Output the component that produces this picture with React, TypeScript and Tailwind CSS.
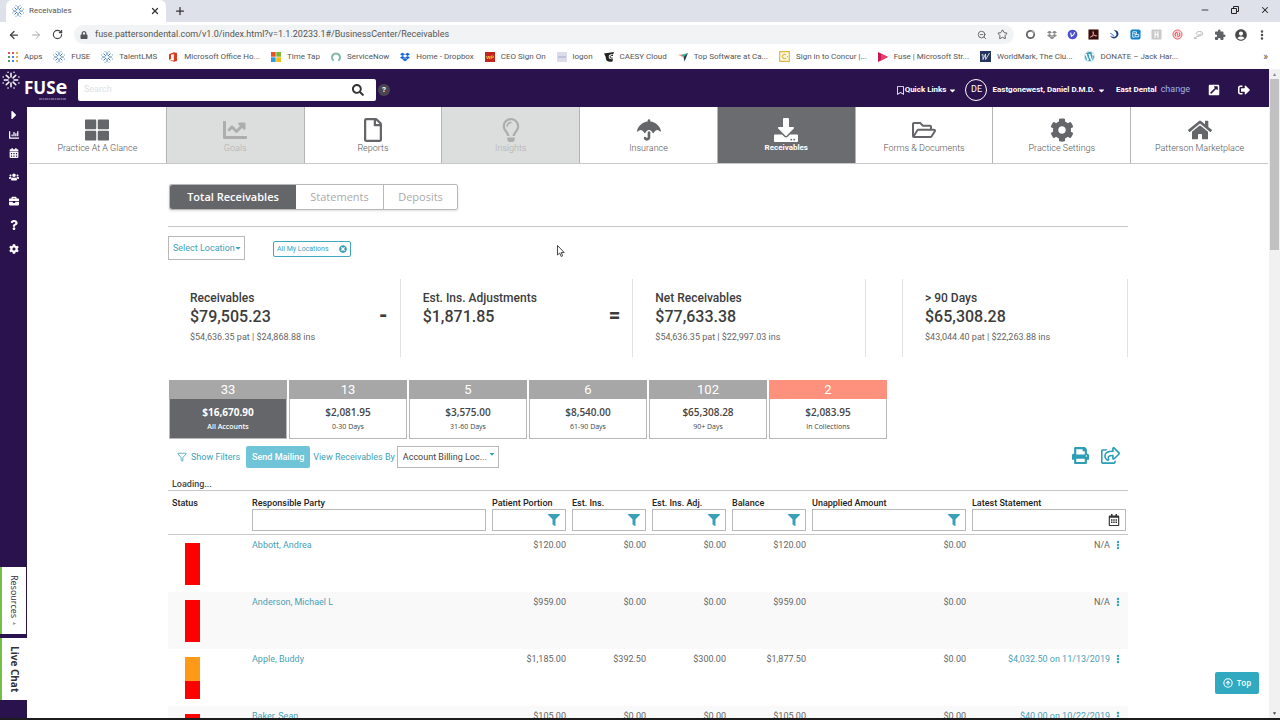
import React from 'react';
import {
  FaBriefcase, FaCalendarAlt, FaCaretDown, FaCaretRight, FaChartBar, FaChartLine, FaCog, FaDownload,
  FaFilter, FaHome, FaLock, FaPrint, FaQuestion, FaRegBookmark, FaRegCalendarAlt,
  FaRegFile, FaRegFolderOpen, FaRegLightbulb, FaRegShareSquare, FaSearch, FaSignOutAlt, FaThLarge,
  FaTimesCircle, FaUmbrella, FaUsers, FaDropbox, FaWordpress, FaExternalLinkSquareAlt,
} from 'react-icons/fa';
import { MdAccountCircle, MdExtension } from 'react-icons/md';
import {
  ArrowLeft, ArrowRight, CircleArrowUp, EllipsisVertical, Funnel, Minus, Plus, RotateCw, Star, X, ZoomOut,
} from 'lucide-react';

const Burst: React.FC<{ className: string }> = ({ className }) => (
  <svg viewBox="0 0 24 24" className={className} fill="none" stroke="currentColor" strokeWidth="2" strokeLinecap="round">
    <path d="M12 3v5M12 16v5M3 12h5M16 12h5M5.6 5.6l3.6 3.6M14.8 14.8l3.6 3.6M18.4 5.6l-3.6 3.6M9.2 14.8l-3.6 3.6" />
    <path d="M8 1.5h.1M16 1.5h.1M22.5 8h.1M22.5 16h.1M16 22.5h.1M8 22.5h.1M1.5 16h.1M1.5 8h.1" />
  </svg>
);

const AppsIcon = () => (
  <svg viewBox="0 0 10 10" className="size-2.5">
    {['#d9534f', '#d9534f', '#f0ad4e', '#4a9e5c', '#4285f4', '#f0ad4e', '#4a9e5c', '#4285f4', '#f0ad4e'].map((c, i) => (
      <rect key={i} x={(i % 3) * 4} y={Math.floor(i / 3) * 4} width="2" height="2" fill={c} />
    ))}
  </svg>
);

const OfficeIcon = () => (
  <svg viewBox="0 0 10 10" className="size-2.5">
    <path d="M1 2.3 6 .2 9 1v8L6 9.8 1 8l4.8.5V1.9L3 2.7v4.4L1 8z" fill="#d83b1e" />
  </svg>
);

const TilesIcon = () => (
  <svg viewBox="0 0 10 10" className="size-2.5">
    <path d="M0 0h4.7v4.7H0z" fill="#e8502e" />
    <path d="M5.3 0H10v4.7H5.3z" fill="#7db72f" />
    <path d="M0 5.3h4.7V10H0z" fill="#2a9fe0" />
    <path d="M5.3 5.3H10V10H5.3z" fill="#f7b916" />
  </svg>
);

const RingIcon = () => (
  <svg viewBox="0 0 10 10" className="size-2.5">
    <path d="M2.6 8.6a4 4 0 1 1 4.8 0" fill="none" stroke="#7fb8a4" strokeWidth="2" />
  </svg>
);

const CeoIcon = () => (
  <svg viewBox="0 0 10 10" className="size-2.5">
    <path d="M0 0h10v10H0z" fill="#c3241b" />
    <path d="M1.5 4l1 3 1-3 1 3 .6-3M6.2 7V4h1.5a.8.8 0 0 1 0 1.7H6.5" fill="none" stroke="#f9cf3c" strokeWidth=".8" />
  </svg>
);

const LogonIcon = () => (
  <svg viewBox="0 0 10 10" className="size-2.5">
    <path d="M0 0h10v10H0z" fill="#dcdcec" />
    <path d="M1 5h8" stroke="#a9a9cc" />
  </svg>
);

const CaesyIcon = () => (
  <svg viewBox="0 0 10 10" className="size-2.5">
    <path d="M0 1.5 10 0 9 2.5C6 1.8 4.6 3 4.7 5c.1 2 2 2.7 4.3 2L8.5 9.5C4 10.5 1.5 8.5 1.7 5z" fill="#222" />
    <path d="M9 3.5C7 3.2 6 4 6.2 5.2c.2 1 1.3 1.2 2.6.8" fill="none" stroke="#222" />
  </svg>
);

const CapterraIcon = () => (
  <svg viewBox="0 0 10 10" className="size-2.5">
    <path d="M0 2.5 6 3 4.5 5z" fill="#f58a5b" />
    <path d="M3 2.7 10 1 6 5z" fill="#3fb0a0" />
    <path d="M10 1 6.5 9.5 5.5 5z" fill="#1d3c4f" />
  </svg>
);

const ConcurIcon = () => (
  <svg viewBox="0 0 11 11" className="size-[11px]">
    <path d="M.7.7h9.6v9.6H.7z" fill="#fff8e0" stroke="#e3b63c" strokeWidth="1.2" />
    <path d="M6.8 3.7a2.2 2.2 0 1 0 0 3.6M8.5 5.5h.1" fill="none" stroke="#d9a520" strokeWidth="1" strokeLinecap="round" />
  </svg>
);

const StreamIcon = () => (
  <svg viewBox="0 0 10 10" className="size-2.5">
    <path d="M0 0 10 5 0 10z" fill="#c8194f" />
    <path d="M3 1.5 10 5 3 8.5z" fill="#e5406f" />
  </svg>
);

const WorldMarkIcon = () => (
  <svg viewBox="0 0 11 11" className="size-[11px]">
    <path d="M0 0h11v11H0z" fill="#24365f" />
    <path d="M1.5 4l1.5-.5L3 8.5 5.5 3 5.7 8.5 9.5 2" fill="none" stroke="#fff" strokeWidth=".8" />
  </svg>
);

const bookmarks = [
  { label: 'Apps', icon: <AppsIcon /> },
  { label: 'FUSE', icon: <Burst className="size-3 text-[#3f78b5]" /> },
  { label: 'TalentLMS', icon: <Burst className="size-3 text-[#3f78b5]" /> },
  { label: 'Microsoft Office Ho...', icon: <OfficeIcon /> },
  { label: 'Time Tap', icon: <TilesIcon /> },
  { label: 'ServiceNow', icon: <RingIcon /> },
  { label: 'Home - Dropbox', icon: <FaDropbox className="size-2.5 text-[#1763d6]" /> },
  { label: 'CEO Sign On', icon: <CeoIcon /> },
  { label: 'logon', icon: <LogonIcon /> },
  { label: 'CAESY Cloud', icon: <CaesyIcon /> },
  { label: 'Top Software at Ca...', icon: <CapterraIcon /> },
  { label: 'Sign in to Concur |...', icon: <ConcurIcon /> },
  { label: 'Fuse | Microsoft Str...', icon: <StreamIcon /> },
  { label: 'WorldMark, The Clu...', icon: <WorldMarkIcon /> },
  { label: 'DONATE – Jack Har...', icon: <FaWordpress className="size-[11px] text-[#3a9fb5]" /> },
];

const extensions = [
  {
    name: 'Shield',
    icon: (
      <svg viewBox="0 0 12 12" className="size-[11px]">
        <circle cx="6" cy="6" r="4" fill="#fff" stroke="#666" strokeWidth="2" />
        <path d="M6 2h4v4z" fill="#aaa" />
      </svg>
    ),
  },
  { name: 'Dropbox', icon: <FaDropbox className="size-2.5 text-[#8a8a8a]" /> },
  {
    name: 'Notes',
    icon: (
      <svg viewBox="0 0 12 12" className="size-[11px]">
        <circle cx="6" cy="6" r="5.3" fill="#4a4fcf" />
        <path d="M4 4l.8 4L7 6.5 8.5 3.5" fill="none" stroke="#fff" strokeWidth="1.2" />
      </svg>
    ),
  },
  {
    name: 'Acrobat',
    icon: (
      <svg viewBox="0 0 12 12" className="size-[11px]">
        <path d="M.5.5h11v11H.5z" fill="#3a0d0d" />
        <path d="M2.5 9C5 8 6.5 5 5.8 3c-.6-.8-.9.3 0 2C6.8 7 8 8 9.5 7.6 9.5 6.5 5 7 2.5 9z" fill="none" stroke="#f2b7a8" strokeWidth=".8" />
      </svg>
    ),
  },
  {
    name: 'Swirl',
    icon: (
      <svg viewBox="0 0 12 12" className="size-[11px]">
        <path d="M5 1c5 0 7 4 4 7.5-2.5 3-6 2-8-1.5 3 2 5 2 6.5.5C9 5.5 8 3 5 1z" fill="#1d3f7a" />
        <path d="M1.5 4.5l4 3" stroke="#4a90d9" strokeWidth="1.2" />
      </svg>
    ),
  },
  {
    name: 'Reader',
    icon: (
      <svg viewBox="0 0 12 12" className="size-[11px]">
        <rect x=".5" y=".5" width="11" height="11" rx="2" fill="#0f7fd0" />
        <path d="M3 3h4v2.5M3 3v6h2M5.5 6h4v2.5h-4zM4 5h2" fill="none" stroke="#fff" strokeWidth=".9" />
      </svg>
    ),
  },
  {
    name: 'Honey',
    icon: (
      <svg viewBox="0 0 12 12" className="size-[11px]">
        <rect x=".5" y=".5" width="11" height="11" rx="1" fill="#c9c9c9" />
        <path d="M4.5 2.5v7M7.5 2.5v7M4.5 6h3" stroke="#fff" strokeWidth="1.3" />
      </svg>
    ),
  },
  {
    name: 'Target',
    icon: (
      <svg viewBox="0 0 12 12" className="size-[11px]">
        <circle cx="6" cy="6" r="5" fill="#fbd9db" stroke="#e0555f" />
        <path d="M4 8c-1.5-2.5 0-4.5 2-4.5M8 4c1.5 2.5 0 4.5-2 4.5M6 5v2" fill="none" stroke="#e0555f" strokeWidth="1.1" />
      </svg>
    ),
  },
  {
    name: 'Loop',
    icon: (
      <svg viewBox="0 0 12 12" className="size-[11px]">
        <path d="M1 10c2-2 6-2 9-3.5C12 4 9 2 5.5 3 2.5 4 3 6.5 6 6.5c2 0 3-1.5 2-2M1 10l3 .5" fill="none" stroke="#aaa" strokeWidth=".9" />
      </svg>
    ),
  },
  { name: 'Extensions', icon: <MdExtension className="size-3 text-[#5f6368]" /> },
  { name: 'Profile', icon: <MdAccountCircle className="size-3.5 text-[#4a4a4a]" /> },
  { name: 'Menu', icon: <EllipsisVertical className="size-3 text-[#444]" strokeWidth={3} /> },
];

const sections = [
  { label: 'Practice At A Glance', Icon: FaThLarge },
  { label: 'Goals', Icon: FaChartLine, disabled: true },
  { label: 'Reports', Icon: FaRegFile },
  { label: 'Insights', Icon: FaRegLightbulb, disabled: true },
  { label: 'Insurance', Icon: FaUmbrella },
  { label: 'Receivables', Icon: FaDownload, active: true },
  { label: 'Forms & Documents', Icon: FaRegFolderOpen },
  { label: 'Practice Settings', Icon: FaCog },
  { label: 'Patterson Marketplace', Icon: FaHome },
];

const totals = [
  { title: 'Receivables', amount: '$79,505.23', detail: '$54,636.35 pat | $24,868.88 ins', sign: '-' },
  { title: 'Est. Ins. Adjustments', amount: '$1,871.85', sign: '=' },
  { title: 'Net Receivables', amount: '$77,633.38', detail: '$54,636.35 pat | $22,997.03 ins' },
];

const buckets = [
  { count: 33, amount: '$16,670.90', label: 'All Accounts', kind: 'selected' },
  { count: 13, amount: '$2,081.95', label: '0-30 Days' },
  { count: 5, amount: '$3,575.00', label: '31-60 Days' },
  { count: 6, amount: '$8,540.00', label: '61-90 Days' },
  { count: 102, amount: '$65,308.28', label: '90+ Days' },
  { count: 2, amount: '$2,083.95', label: 'In Collections', kind: 'collections' },
];

const columns = [
  { id: 'status', label: 'Status', width: 'w-[80px]', filter: 'none' },
  { id: 'party', label: 'Responsible Party', width: 'w-[240px]', filter: 'text' },
  { id: 'patient', label: 'Patient Portion', width: 'w-[80px]', filter: 'funnel' },
  { id: 'ins', label: 'Est. Ins.', width: 'w-[80px]', filter: 'funnel' },
  { id: 'adj', label: 'Est. Ins. Adj.', width: 'w-[80px]', filter: 'funnel' },
  { id: 'balance', label: 'Balance', width: 'w-[80px]', filter: 'funnel' },
  { id: 'unapplied', label: 'Unapplied Amount', width: 'w-[160px]', filter: 'funnel' },
  { id: 'statement', label: 'Latest Statement', width: 'w-[160px]', filter: 'date' },
];

const accounts = [
  { name: 'Abbott, Andrea', amounts: ['$120.00', '$0.00', '$0.00', '$120.00', '$0.00'], statement: 'N/A' },
  { name: 'Anderson, Michael L', amounts: ['$959.00', '$0.00', '$0.00', '$959.00', '$0.00'], statement: 'N/A' },
  { name: 'Apple, Buddy', amounts: ['$1,185.00', '$392.50', '$300.00', '$1,877.50', '$0.00'], statement: '$4,032.50 on 11/13/2019', mixed: true },
  { name: 'Baker, Sean', amounts: ['$105.00', '$0.00', '$0.00', '$105.00', '$0.00'], statement: '$40.00 on 10/22/2019' },
];

const BrowserChrome: React.FC = () => (
  <div className="shrink-0 bg-white text-[#555]">
    <div className="flex h-[22px] items-center bg-[#dee0ea] pl-1.5">
      <div className="flex h-full w-40 items-center rounded-t-md bg-white px-1.5">
        <Burst className="size-3 text-[#3f78b5]" />
        <span className="ml-[5px] flex-1 text-[8px]">Receivables</span>
        <button aria-label="Close tab"><X className="size-2.5 text-[#333]" strokeWidth={3} /></button>
      </div>
      <button aria-label="New tab" className="ml-2"><Plus className="size-3 text-[#333]" strokeWidth={2.5} /></button>
      <div className="ml-auto flex items-center gap-5 pr-2.5 pb-0.5 text-[#222]">
        <button aria-label="Minimize"><Minus className="size-2.5" /></button>
        <button aria-label="Restore">
          <svg viewBox="0 0 10 10" className="size-2.5" fill="none" stroke="currentColor">
            <path d="M1.5 3.5h5v5h-5zM3.5 3.5v-2h5v5h-2" />
          </svg>
        </button>
        <button aria-label="Close"><X className="size-2.5" strokeWidth={2.5} /></button>
      </div>
    </div>
    <div className="flex h-[25px] items-center px-2">
      <div className="flex items-center gap-2.5 text-[#444]">
        <button aria-label="Back"><ArrowLeft className="size-3" strokeWidth={2.5} /></button>
        <button aria-label="Forward"><ArrowRight className="size-3 text-[#aaa]" /></button>
        <button aria-label="Reload"><RotateCw className="size-[11px]" strokeWidth={2.5} /></button>
      </div>
      <div className="ml-[11px] flex h-[19px] flex-1 items-center rounded-full bg-[#f1f3f4] px-1.5">
        <FaLock className="size-2 text-[#555]" />
        <input
          aria-label="Address"
          readOnly
          value="fuse.pattersondental.com/v1.0/index.html?v=1.1.20233.1#/BusinessCenter/Receivables"
          className="ml-[7px] flex-1 bg-transparent text-[9px] outline-none"
        />
        <div className="flex items-center gap-2.5 text-[#555]">
          <ZoomOut className="size-2.5" />
          <Star className="size-[11px]" />
        </div>
      </div>
      <div className="ml-1.5 flex items-center">
        {extensions.map(e => (
          <button key={e.name} aria-label={e.name} className="flex w-[21px] justify-center">{e.icon}</button>
        ))}
      </div>
    </div>
    <div className="flex h-[22px] items-center gap-[11px] pr-3 pb-[3px] pl-2 text-[8px]">
      {bookmarks.map(b => (
        <a key={b.label} href="#" className="flex shrink-0 items-center gap-1.5">
          {b.icon}
          {b.label}
        </a>
      ))}
      <span className="ml-auto text-[10px]">»</span>
    </div>
  </div>
);

const TopBar: React.FC = () => (
  <header className="flex h-[38px] shrink-0 items-center bg-[#2a124d] pt-1 pr-[19px] text-[8px] font-bold text-white">
    <div className="flex h-full w-[78px] items-start">
      <Burst className="-mt-0.5 ml-0.5 size-[18px]" />
      <div className="mt-1 ml-1">
        <div className="flex items-baseline font-['Open_Sans',sans-serif] text-[17px] leading-5 font-bold">
          FUS<span className="text-[20px]">e</span>
        </div>
        <svg viewBox="0 0 42 2" className="h-0.5 w-[42px]">
          <path d="M15 1h27" stroke="#a99cc2" strokeDasharray="3 .5 2 .5" />
        </svg>
      </div>
    </div>
    <div className="flex h-[22px] w-[298px] items-center rounded-xs bg-white px-1.5">
      <input aria-label="Search" placeholder="Search" className="flex-1 text-[9px] font-normal text-[#333] outline-none placeholder:text-[#e0e0e0]" />
      <button aria-label="Run search" className="mr-1.5"><FaSearch className="size-3 text-[#333]" /></button>
    </div>
    <button className="ml-0.5 flex size-3 items-center justify-center rounded-full bg-[#4a4550]" aria-label="Help">?</button>
    <div className="ml-auto flex items-center">
      <button className="flex items-center"><FaRegBookmark className="size-[9px]" />Quick Links<FaCaretDown className="ml-0.5 size-[9px]" /></button>
      <span className="ml-2 flex size-[22px] items-center justify-center rounded-full border border-white text-[9px] font-normal">DE</span>
      <button className="ml-[5px] flex items-center gap-0.5">Eastgonewest, Daniel D.M.D.<FaCaretDown className="size-[9px]" /></button>
      <span className="ml-2.5">East Dental</span>
      <a href="#" className="ml-1 text-[9px] font-normal text-[#9db8e8]">change</a>
      <button aria-label="Open in new window" className="ml-[18px]"><FaExternalLinkSquareAlt className="size-3" /></button>
      <button aria-label="Sign out" className="ml-[18px]"><FaSignOutAlt className="size-3" /></button>
    </div>
  </header>
);

const SideBar: React.FC = () => (
  <aside className="flex w-[27px] shrink-0 flex-col bg-[#2a124d] text-white">
    <nav className="flex flex-col items-center pt-px">
      <button aria-label="Expand" className="mb-2"><FaCaretRight className="size-3.5" /></button>
      <button aria-label="Dashboard" className="mb-2"><FaChartBar className="size-2.5" /></button>
      <button aria-label="Schedule" className="mb-3.5"><FaCalendarAlt className="size-2.5" /></button>
      <button aria-label="Patients" className="mb-3.5"><FaUsers className="size-2.5" /></button>
      <button aria-label="Business Center" className="mb-3.5"><FaBriefcase className="size-2.5" /></button>
      <button aria-label="Help" className="mb-3.5"><FaQuestion className="size-2.5" /></button>
      <button aria-label="Settings"><FaCog className="size-2.5" /></button>
    </nav>
    <div className="mt-auto mb-[18px] flex flex-col gap-1 font-['Open_Sans',sans-serif] text-[#333]">
      <button className="mr-px flex h-[67px] items-center justify-center border-l-2 border-[#74bf44] bg-white text-[9px] [writing-mode:vertical-rl]">
        Resources <span className="text-[6px] text-[#999]">▸</span>
      </button>
      <button className="flex h-[62px] items-center justify-center border-l-2 border-[#74bf44] bg-white text-[10px] font-bold [writing-mode:vertical-rl]">
        Live Chat
      </button>
    </div>
  </aside>
);

const SectionNav: React.FC = () => (
  <nav className="mr-px ml-0.5 flex h-[57px] border-b border-[#c8c8c8]">
    {sections.map(({ label, Icon, disabled, active }) => (
      <button
        key={label}
        disabled={disabled}
        className={`flex flex-1 flex-col items-center border-r border-[#b4b4b4] pt-[11px] leading-3 last:border-r-0 ${
          active ? 'bg-[#6b6c70] text-[8px] font-bold text-white' : disabled ? 'bg-[#dcdedd] text-[9px] font-light text-[#b0b0b0]' : 'text-[9px] font-light text-[#555]'
        }`}
      >
        <Icon className={`size-6 ${active ? 'text-white' : disabled ? 'text-[#adadad]' : 'text-[#65666a]'}`} />
        {label}
      </button>
    ))}
  </nav>
);

const Total: React.FC<{ title: string; amount: string; detail?: string; sign?: string }> = ({ title, amount, detail, sign }) => (
  <div className="flex h-full items-start justify-between pt-3 pr-3 pl-[22px] text-[#3c3c3c]">
    <div>
      <h3 className="text-[12px] leading-[14px] font-medium">{title}</h3>
      <p className="text-[16px] leading-6 font-medium">{amount}</p>
      {detail && <p className="mt-0.5 text-[9px] leading-3 text-[#666]">{detail}</p>}
    </div>
    {sign && <span className="pt-3 text-[20px] leading-6 font-black">{sign}</span>}
  </div>
);

const AccountsTable: React.FC = () => (
  <table className="w-full table-fixed text-[9px] text-[#666]">
    <thead>
      <tr className="h-11 border-y border-[#c8c8c8] text-left align-top text-[#222]">
        {columns.map(c => (
          <th key={c.id} className={`${c.width} pt-[7px] pr-0.5 pl-1 font-medium`}>
            {c.filter === 'none' ? (
              <span className="block leading-[11px]">{c.label}</span>
            ) : (
              <>
                <label htmlFor={c.id} className="block leading-[11px] whitespace-nowrap">{c.label}</label>
                <div className="flex h-[22px] items-center border border-[#b8b8b8] bg-white pr-[5px]">
                  <input id={c.id} className="w-full min-w-0 px-1 font-normal outline-none" />
                  {c.filter === 'funnel' && <FaFilter className="size-3 shrink-0 text-[#3aa0b8]" />}
                  {c.filter === 'date' && <FaRegCalendarAlt className="size-3 shrink-0 text-[#333]" />}
                </div>
              </>
            )}
          </th>
        ))}
      </tr>
    </thead>
    <tbody>
      {accounts.map(a => (
        <tr key={a.name} className="h-[57px] align-top even:bg-[#f9f9f9]">
          <td className="pt-2 pl-[17px]">
            <div className="flex h-[42px] w-[15px] flex-col bg-[#fe0000]">
              {a.mixed && <div className="h-6 bg-[#fe9a17]" />}
            </div>
          </td>
          <td className="pt-1 pl-1 leading-3"><a href="#" className="text-[#4a9fb8]">{a.name}</a></td>
          {a.amounts.map((v, i) => (
            <td key={i} className="pt-1 pr-0.5 text-right leading-3">{v}</td>
          ))}
          <td className="pt-1 pr-[5px] leading-3">
            <div className="flex items-center justify-end gap-[3px]">
              {a.statement === 'N/A' ? a.statement : <a href="#" className="text-[#4a9fb8]">{a.statement}</a>}
              <button aria-label={`Actions for ${a.name}`}><EllipsisVertical className="size-2.5 text-[#2b9db5]" strokeWidth={4} /></button>
            </div>
          </td>
        </tr>
      ))}
    </tbody>
  </table>
);

const Receivables: React.FC = () => (
  <main className="mx-auto w-full max-w-[960px] pt-5">
    <div className="border-b border-[#c8c8c8] pb-4">
      <div className="ml-px inline-flex h-[26px] rounded-xs border border-[#b8b8b8] font-['Open_Sans',sans-serif] text-[11px] text-[#aaa] shadow-sm">
        <button className="w-[126px] rounded-l-xs bg-[#65666a] font-semibold text-white">Total Receivables</button>
        <button className="w-[88px] border-r border-[#b8b8b8]">Statements</button>
        <button className="w-[73px]">Deposits</button>
      </div>
    </div>

    <div className="mt-[9px] flex items-center">
      <button className="flex h-6 w-[77px] items-center justify-between border border-[#b8b8b8] pr-[3px] pl-1 text-[9px] whitespace-nowrap text-[#3f9fb8]">
        Select Location<FaCaretDown className="size-2" />
      </button>
      <div className="mt-0.5 ml-7 flex h-4 w-[78px] items-center justify-between rounded-xs border border-[#3fa8bd] px-[3px] text-[7px] text-[#3f9fb8]">
        All My Locations
        <button aria-label="Remove All My Locations"><FaTimesCircle className="size-2" /></button>
      </div>
    </div>

    <div className="mt-[19px] flex h-[78px]">
      {totals.map(t => (
        <div key={t.title} className="flex-1 border-r border-[#e2e2e2]"><Total {...t} /></div>
      ))}
      <div className="w-9" />
      <div className="w-[226px] border-x border-[#e2e2e2]">
        <Total title="> 90 Days" amount="$65,308.28" detail="$43,044.40 pat | $22,263.88 ins" />
      </div>
    </div>

    <div className="mt-[23px] ml-px flex gap-0.5">
      {buckets.map(b => (
        <button key={b.label} className="w-[118px] text-center">
          <div className={`h-[19px] text-[13px] leading-[19px] text-white ${b.kind === 'collections' ? 'bg-[#fd917d]' : 'bg-[#a7a7a7]'}`}>{b.count}</div>
          <div className={`h-10 border border-t-0 border-[#b8b8b8] pt-1.5 font-['Open_Sans',sans-serif] ${b.kind === 'selected' ? 'bg-[#65666a] text-white' : 'text-[#444]'}`}>
            <div className={`text-[10px] leading-[14px] ${b.kind === 'selected' ? 'font-bold' : 'font-semibold'}`}>{b.amount}</div>
            <div className={`pt-0.5 text-[7px] leading-3 ${b.kind === 'selected' ? 'font-semibold' : ''}`}>{b.label}</div>
          </div>
        </button>
      ))}
    </div>

    <div className="mt-[7px] flex h-[22px] items-center text-[9px] text-[#3f9fb8]">
      <button className="ml-[9px] flex items-center gap-1"><Funnel className="size-2.5" />Show Filters</button>
      <button className="ml-1.5 h-full w-16 rounded-xs bg-[#70c4d7] font-medium text-white">Send Mailing</button>
      <label htmlFor="view-by" className="ml-[3px]">View Receivables By</label>
      <div className="relative ml-0.5 h-full w-[102px]">
        <select id="view-by" className="h-full w-full appearance-none border border-[#b8b8b8] bg-white pl-[5px] text-[#444]">
          <option>Account Billing Loc...</option>
        </select>
        <FaCaretDown className="pointer-events-none absolute top-1 right-[3px] size-2" />
      </div>
      <div className="mr-2 ml-auto flex items-center gap-3 self-start text-[#2b9db5]">
        <button aria-label="Print"><FaPrint className="size-[17px]" /></button>
        <button aria-label="Share"><FaRegShareSquare className="size-[19px]" /></button>
      </div>
    </div>

    <p className="mt-2.5 pl-1 text-[9px] leading-3 font-medium text-[#444]">Loading...</p>
    <AccountsTable />
  </main>
);

export default function App() {
  return (
    <div className="flex h-screen flex-col overflow-hidden border-b-2 border-[#1c1c1c] bg-white font-[Roboto,sans-serif]">
      <BrowserChrome />
      <div className="flex min-h-0 flex-1">
        <div className="relative flex min-w-0 flex-1 flex-col">
          <TopBar />
          <div className="flex min-h-0 flex-1">
            <SideBar />
            <div className="min-w-0 flex-1 overflow-hidden">
              <SectionNav />
              <Receivables />
            </div>
          </div>
          <button className="absolute right-2.5 bottom-6 flex h-[22px] w-11 items-center justify-center gap-1 rounded-xs bg-[#31aac1] font-['Open_Sans',sans-serif] text-[8px] font-semibold text-white">
            <CircleArrowUp className="size-2.5" strokeWidth={2.5} />Top
          </button>
          <svg viewBox="0 0 8 12" className="absolute top-44 left-[557px] h-3 w-2">
            <path d="M.5.5v9.5l2.2-2 1.5 3.5 1.5-.7-1.5-3.3h3z" fill="#fff" stroke="#333" strokeWidth=".9" />
          </svg>
        </div>
        {/* page scrollbar */}
        <div className="flex w-[11px] flex-col items-center bg-[#f1f1f1]">
          <span className="h-2.5 text-[5px] leading-[10px] text-[#888]">▲</span>
          <div className="h-[171px] w-[9px] bg-[#c1c1c1]" />
          <span className="mt-auto h-2.5 text-[5px] leading-[10px] text-[#444]">▼</span>
        </div>
      </div>
    </div>
  );
}
